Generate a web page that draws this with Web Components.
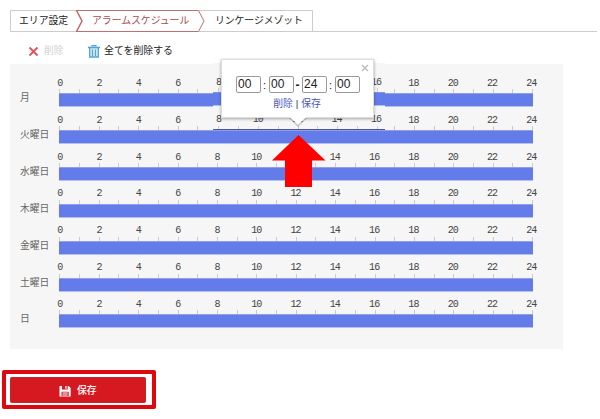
<!DOCTYPE html>
<html lang="ja">
<head>
<meta charset="utf-8">
<title>アラームスケジュール</title>
<style>
body{margin:0;width:600px;height:419px;overflow:hidden;background:#fff;font-family:"Liberation Sans","Noto Sans CJK JP",sans-serif;font-size:9.9px;color:#222}
</style>
</head>
<body>
<alarm-page></alarm-page>
<script>
const define = (name, html) => customElements.define(name, class extends HTMLElement {
  constructor() {
    super();
    this.attachShadow({mode: 'open'}).innerHTML = typeof html === 'function' ? html(this) : html;
  }
});

define('step-tabs', `
<style>
:host{display:block;position:relative;margin:10px 3px 0 10px;height:22px}
svg{display:block;position:absolute;left:0;top:0}
nav{position:relative;display:flex;height:21px;line-height:21px;white-space:nowrap}
span{box-sizing:border-box}
.a{width:82px;padding-left:9px;letter-spacing:-.05px}
.b{width:123px;color:#a54d52;letter-spacing:-.05px}
.c{letter-spacing:-.1px}
</style>
<svg width="587" height="22" fill="none">
<path d="M67 .5H.5V21.5H67M189 .5H302.5V21.5M189 21.5H587" stroke="#ccc"/>
<path d="M66 .5H188.5L194 11L188.5 21.5H66" stroke="#bd7074"/>
<path d="M66.5 .5L72 11L66.5 21.5" stroke="#c2646a" stroke-width="1.5"/>
</svg>
<nav><span class="a">エリア設定</span><span class="b">アラームスケジュール</span><span class="c">リンケージメゾット</span></nav>`);

define('tool-bar', `
<style>
:host{display:flex;align-items:center;height:32px;padding-left:28px;line-height:14px}
svg{display:block;position:relative;top:3px}
span{position:relative;top:3px}
.off{color:#d2d2d2;width:44px;margin-left:5px;font-size:9.7px}
.on{margin-left:4px}
</style>
<svg width="11" height="11"><path d="M1.5 1.5L9.5 9.5M9.5 1.5L1.5 9.5" stroke="#e0565c" stroke-width="1.9"/></svg>
<span class="off">削除</span>
<svg width="12" height="13" fill="#d5eaf6" stroke="#51a5d6"><path d="M1.7 3V12H10.3V3M4 1.5V.6H8V1.5" stroke-width="1.3"/><path d="M0 2.5H12" stroke-width="1.6"/><path d="M4.5 4.5V11M7.5 4.5V11" stroke-width="1.2"/></svg>
<span class="on">全てを削除する</span>`);

define('time-scale', el => {
  const from = +el.getAttribute('from') || 0, to = +(el.getAttribute('to') || 24);
  const skip = (el.getAttribute('skip') || '').split(' ');
  let ticks = '', nums = '';
  for (let h = from; h <= to; h++) {
    ticks += '<i></i>';
    if (h % 2 === 0) nums += `<b>${skip.includes(String(h)) ? '' : h}</b>`;
  }
  return `
<style>
:host{display:block}
.n{display:flex;justify-content:space-between;height:14px;margin:0 -8.5px 0 -9.5px}
b{position:relative;top:1.5px;font:10px/14px "Liberation Mono",monospace;letter-spacing:-.9px;width:20px;text-align:center;color:#444}
.t{display:flex;justify-content:space-between;height:4px;margin-right:-.5px}
i{width:1px;background:#ccc}
.bar{box-sizing:border-box;height:14px;background:#637ce9;border-top:1px solid #8f9fe9;border-bottom:1px solid #b5bff0}
</style>
<div class="n">${nums}</div><div class="t">${ticks}</div><div class="bar"></div>`;
});

define('day-row', el => `
<style>
:host{display:flex;height:36.87px;padding-left:10px}
span{width:39.3px;line-height:14px;padding-top:16px;color:#666;font-size:9.8px;white-space:nowrap}
time-scale{width:473.7px}
</style>
<span><slot></slot></span><time-scale skip="${el.getAttribute('skip') || ''}"></time-scale>`);

define('week-panel', `
<style>
:host{display:block;box-sizing:border-box;width:553px;height:285px;background:#f6f6f6;padding-top:11.3px}
</style><slot></slot>`);

define('active-slice', `
<style>
:host{position:absolute;left:213px;top:63px;width:171.5px;height:67px;background:#f6f6f6;overflow:hidden}
.in{margin:11px 0 0 5px;width:159.5px}
.line{position:absolute;left:0;right:0;top:29px;height:14px;box-sizing:border-box;background:#637ce9;border-top:1px solid #8292e8;border-bottom:1px solid #b5bff0}
.edge{position:absolute;left:0;right:0;bottom:0;height:1px;background:#4c5890}
time-scale{height:37.5px}
</style>
<div class="in"><time-scale from="8" to="16" skip="10 12 14"></time-scale><time-scale from="8" to="16"></time-scale></div>
<div class="line"></div><div class="edge"></div>`);

define('time-popup', `
<style>
:host{position:absolute;left:220.5px;top:59px;width:153px;height:58.5px;box-sizing:border-box;background:#fff;border:1px solid #ddd;box-shadow:0 1px 3px #0005;color:#222}
.close{position:absolute;right:4px;top:3.5px}
.tail{position:absolute;left:66px;top:56px}
.f{display:flex;align-items:center;padding:16px 0 0 14px;height:17px}
.v{box-sizing:border-box;width:25px;height:17px;border:1px solid #999;border-radius:2px;background:#fff;font:12px/15px "Liberation Sans",sans-serif;padding-left:1.5px}
.s{width:8px;text-align:center;font-size:11px}
.d{width:8px;text-align:center;font-weight:bold;font-size:12px}
.l{display:flex;justify-content:center;gap:3px;line-height:14px;margin-top:3.5px;font-size:9.8px;color:#4b58ba}
.l i{font-style:normal;color:#333}
</style>
<svg class="close" width="8" height="8"><path d="M1 1L7 7M7 1L1 7" stroke="#bbb" stroke-width="1.4"/></svg>
<svg class="tail" width="20" height="11"><path d="M2 2L10 10L18 2" fill="none" stroke="#0003" stroke-width="1.6"/><path d="M1 0H19V.5L10 8.6L1 .5Z" fill="#fff"/></svg>
<div class="f"><span class="v">00</span><span class="s">:</span><span class="v">00</span><span class="d">-</span><span class="v">24</span><span class="s">:</span><span class="v">00</span></div>
<div class="l"><span>削除</span><i>|</i><span>保存</span></div>`);

define('red-arrow', `
<style>:host{position:absolute;left:271px;top:134px}svg{display:block}</style>
<svg width="56" height="54"><path d="M27.5 1L54.5 26.5H41V53H14V26.5H1Z" fill="#fe0000"/></svg>`);

define('save-button', `
<style>
:host{box-sizing:border-box;display:block;margin:21px 0 0 2px;width:154px;height:39px;border:4px solid #df080e;border-radius:2px;padding:3px 6px 2px 4px}
div{height:26px;box-sizing:border-box;background:#d61920;border-radius:1.5px;border:1px solid #c0282d;display:flex;align-items:center;color:#fff;padding-left:48px;gap:6px;font-size:9.8px;line-height:14px;font-weight:500}
svg{display:block;position:relative;top:.5px}
span{position:relative;top:1px}
</style>
<div><svg width="12" height="12"><path d="M.5 1H9.5L11.7 3V11.5H.5Z" fill="#fff"/><path d="M3 1V4.5H8.7V1M2.5 11V6.7H9.7V11Z" fill="#d61920"/><path d="M6.3 1H7.6V3.7H6.3ZM3.5 7.6H8.7V8.5H3.5ZM3.5 9.5H8.7V10.5H3.5Z" fill="#fff"/></svg><span><slot></slot></span></div>`);

define('alarm-page', `
<style>:host{display:flow-root;position:relative;width:600px;height:419px}week-panel{margin-left:10px}</style>
<step-tabs></step-tabs>
<tool-bar></tool-bar>
<week-panel>
<day-row></day-row>
</week-panel>
<save-button>保存</save-button>
<active-slice></active-slice>
<time-popup></time-popup>
<red-arrow></red-arrow>`.replace('<day-row></day-row>',
  ['月', '火曜日', '水曜日', '木曜日', '金曜日', '土曜日', '日']
    .map((d, i) => `<day-row skip="${i < 2 ? '8 10 12 14 16' : i === 2 ? '12' : ''}">${d}</day-row>`).join('')));
</script>
</body>
</html>
